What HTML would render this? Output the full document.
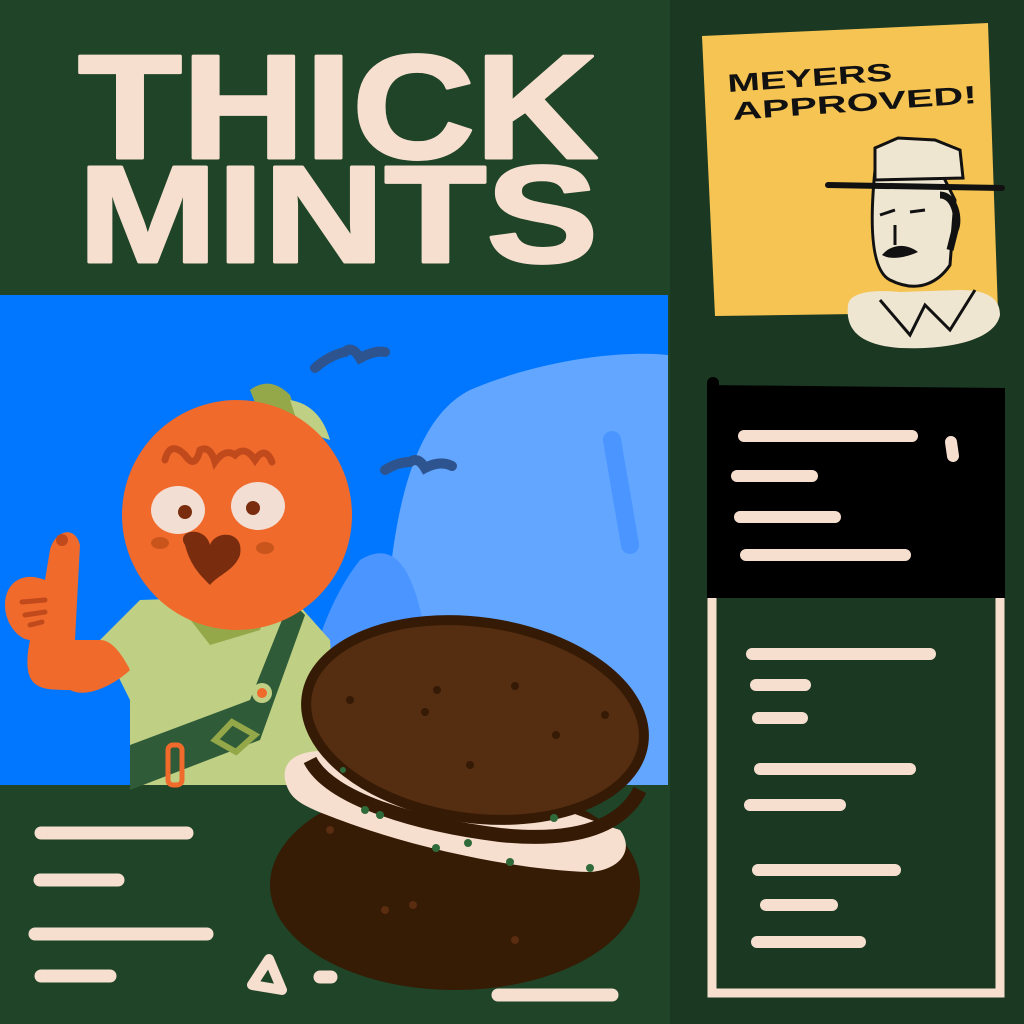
<!DOCTYPE html>
<html><head><meta charset="utf-8"><style>
html,body{margin:0;padding:0;background:#1f4427;}
svg{display:block}
</style></head><body>
<svg width="1024" height="1024" viewBox="0 0 1024 1024" xmlns="http://www.w3.org/2000/svg">
<rect width="1024" height="1024" fill="#1f4427"/>
<rect x="670" y="0" width="354" height="1024" fill="#1b3822"/>
<!-- title -->
<g fill="#f7dfd0" font-family="Liberation Sans, sans-serif" font-weight="bold" stroke="#f7dfd0" stroke-width="3" stroke-linejoin="round">
<text x="78" y="158" font-size="148" textLength="520" lengthAdjust="spacingAndGlyphs">THICK</text>
<text x="78" y="262" font-size="138" textLength="520" lengthAdjust="spacingAndGlyphs">MINTS</text>
</g>
<!-- blue panel -->
<rect x="0" y="295" width="668" height="490" fill="#0077fe"/>
<path d="M385 785 C380 600 390 430 470 390 C540 360 620 350 668 355 L668 785 Z" fill="#62a6ff"/>
<path d="M290 785 C300 690 320 610 360 560 C410 530 430 600 440 785 Z" fill="#4a95ff"/>
<path d="M612 440 L630 545" stroke="#4a95ff" stroke-width="18" stroke-linecap="round"/>
<path d="M315 368 Q330 355 345 352 Q352 345 360 358 Q375 350 385 352" stroke="#2d548f" stroke-width="10" fill="none" stroke-linecap="round"/>
<path d="M385 470 Q398 462 410 462 Q418 456 425 468 Q440 460 452 466" stroke="#2d548f" stroke-width="10" fill="none" stroke-linecap="round"/>
<!-- character -->
<path d="M100 640 L140 600 L290 595 L330 640 L340 785 L130 785 L130 700 Z" fill="#bfcf84"/>
<path d="M130 785 L130 710 L250 690 L280 610 L300 620 L310 785 Z" fill="#bfcf84"/>
<path d="M290 600 L305 615 L260 740 L130 790 L130 745 L250 700 Z" fill="#2f5b38"/>
<path d="M175 600 L210 645 L260 630 L270 600 Z" fill="#94a849"/>
<circle cx="262" cy="693" r="10" fill="#bfcf84"/><circle cx="262" cy="693" r="5" fill="#f06a2c"/>
<path d="M215 740 L232 722 L255 735 L236 752 Z" fill="none" stroke="#94a849" stroke-width="6"/>
<rect x="168" y="745" width="14" height="40" rx="5" fill="none" stroke="#f06a2c" stroke-width="5"/>
<path d="M30 640 C20 690 40 690 70 690 C90 700 120 680 130 670 C120 650 110 640 100 640 L75 640 L80 545 C75 525 55 530 50 550 L45 580 C20 570 5 585 5 605 C5 625 20 640 30 640 Z" fill="#f06a2c"/>
<path d="M22 602 L45 600 M25 615 L45 612 M30 625 L42 622" stroke="#c14a1d" stroke-width="5" stroke-linecap="round"/>
<circle cx="62" cy="540" r="6" fill="#c14a1d"/>
<path d="M250 390 Q270 375 290 395 L300 425 L258 410 Z" fill="#94a849"/>
<path d="M290 400 Q320 405 330 440 L300 430 Z" fill="#bfcf84"/>
<circle cx="237" cy="515" r="115" fill="#f06a2c"/>
<path d="M165 460 Q170 440 185 455 Q195 470 200 450 Q210 445 215 462 Q225 448 235 455 Q245 445 255 460 Q265 445 272 462" stroke="#c14a1d" stroke-width="7" fill="none" stroke-linecap="round"/>
<ellipse cx="178" cy="510" rx="27" ry="24" fill="#f3ded4"/>
<ellipse cx="258" cy="506" rx="27" ry="24" fill="#f3ded4"/>
<circle cx="185" cy="512" r="7" fill="#7a2d0e"/><circle cx="253" cy="508" r="7" fill="#7a2d0e"/>
<ellipse cx="160" cy="543" rx="9" ry="6" fill="#c9551d"/><ellipse cx="265" cy="548" rx="9" ry="6" fill="#c9551d"/>
<path d="M185 545 C175 530 205 525 210 545 C215 530 245 530 240 555 C235 570 218 575 210 585 C200 575 190 565 185 545 Z" fill="#7a2d0e"/>
<!-- cookie -->
<ellipse cx="455" cy="885" rx="185" ry="105" fill="#361b05"/>
<path d="M285 780 C280 745 330 745 400 760 C480 775 560 810 620 830 C635 850 620 870 590 872 C520 870 420 850 340 820 C300 805 290 800 285 780 Z" fill="#f7dfd0"/>
<ellipse cx="475" cy="720" rx="170" ry="98" transform="rotate(8 475 720)" fill="#552d10" stroke="#351a05" stroke-width="10"/>
<path d="M310 760 C330 800 420 825 500 835 C570 842 620 830 640 790" fill="none" stroke="#351a05" stroke-width="14"/>
<g fill="#351a05"><circle cx="437" cy="690" r="4"/><circle cx="515" cy="686" r="4"/><circle cx="425" cy="712" r="4"/><circle cx="605" cy="715" r="4"/><circle cx="470" cy="765" r="4"/><circle cx="556" cy="735" r="4"/><circle cx="350" cy="700" r="4"/></g>
<g fill="#2f6b3a"><circle cx="343" cy="770" r="3"/><circle cx="365" cy="810" r="4"/><circle cx="380" cy="815" r="4"/><circle cx="436" cy="848" r="4"/><circle cx="468" cy="843" r="4"/><circle cx="510" cy="862" r="4"/><circle cx="554" cy="818" r="4"/><circle cx="590" cy="868" r="4"/></g>
<g fill="#5a2c10"><circle cx="385" cy="910" r="4"/><circle cx="413" cy="905" r="4"/><circle cx="515" cy="940" r="4"/><circle cx="330" cy="830" r="4"/></g>
<!-- bottom text lines -->
<g stroke="#f7dfd0" stroke-width="13" stroke-linecap="round">
<line x1="41" y1="833" x2="187" y2="833"/>
<line x1="40" y1="880" x2="118" y2="880"/>
<line x1="35" y1="934" x2="207" y2="934"/>
<line x1="41" y1="976" x2="110" y2="976"/>
<line x1="498" y1="995" x2="612" y2="995"/>
<line x1="320" y1="977" x2="331" y2="977"/>
</g>
<path d="M252 985 L269 959 L282 990 Z" fill="none" stroke="#f7dfd0" stroke-width="10" stroke-linejoin="round"/>
<!-- note -->
<path d="M702 36 L988 23 L998 312 L715 316 Z" fill="#f5c453"/>
<g font-family="Liberation Sans, sans-serif" font-weight="bold" fill="#111">
<text x="728" y="92" font-size="25" transform="rotate(-4 728 92)" textLength="165" lengthAdjust="spacingAndGlyphs">MEYERS</text>
<text x="733" y="120" font-size="25" transform="rotate(-4 733 120)" textLength="245" lengthAdjust="spacingAndGlyphs">APPROVED!</text>
</g>
<!-- ranger -->
<path d="M848 305 C850 290 880 290 900 292 L960 290 C990 290 1000 300 1000 315 C995 340 950 350 900 348 C860 345 845 330 848 305 Z" fill="#efe6d2"/>
<path d="M880 300 L910 335 L925 305 L950 330 L975 290" fill="none" stroke="#111" stroke-width="3"/>
<path d="M875 170 C870 220 870 270 890 280 C920 295 940 280 950 265 L955 200 L940 170 Z" fill="#efe6d2" stroke="#111" stroke-width="3"/>
<path d="M875 180 L875 148 L898 138 L935 140 L960 150 L963 178 Z" fill="#efe6d2" stroke="#111" stroke-width="3"/>
<path d="M828 185 L1002 188" stroke="#111" stroke-width="6" stroke-linecap="round"/>
<path d="M940 195 C955 195 960 220 955 230 L950 250" stroke="#111" stroke-width="7" fill="none"/>
<path d="M882 255 C890 245 905 242 918 252 C905 258 890 260 882 255 Z" fill="#111"/>
<path d="M880 215 L895 210 M910 212 L925 210 M895 225 L895 245" stroke="#111" stroke-width="3"/>
<!-- black box -->
<path d="M707 385 L1005 388 L1005 598 L707 598 Z" fill="#000"/>
<rect x="707" y="377" width="12" height="215" rx="6" fill="#000"/>
<g stroke="#f7dfd0" stroke-width="12" stroke-linecap="round">
<line x1="744" y1="436" x2="912" y2="436"/>
<line x1="951" y1="442" x2="953" y2="456"/>
<line x1="737" y1="476" x2="812" y2="476"/>
<line x1="740" y1="517" x2="835" y2="517"/>
<line x1="746" y1="555" x2="905" y2="555"/>
</g>
<!-- cream box -->
<path d="M712 598 L712 993 L1000 993 L1000 598" fill="none" stroke="#f7dfd0" stroke-width="9"/>
<g stroke="#f7dfd0" stroke-width="12" stroke-linecap="round">
<line x1="752" y1="654" x2="930" y2="654"/>
<line x1="756" y1="685" x2="805" y2="685"/>
<line x1="758" y1="718" x2="802" y2="718"/>
<line x1="760" y1="769" x2="910" y2="769"/>
<line x1="750" y1="805" x2="840" y2="805"/>
<line x1="758" y1="870" x2="895" y2="870"/>
<line x1="766" y1="905" x2="832" y2="905"/>
<line x1="757" y1="942" x2="860" y2="942"/>
</g>
</svg>
</body></html>
